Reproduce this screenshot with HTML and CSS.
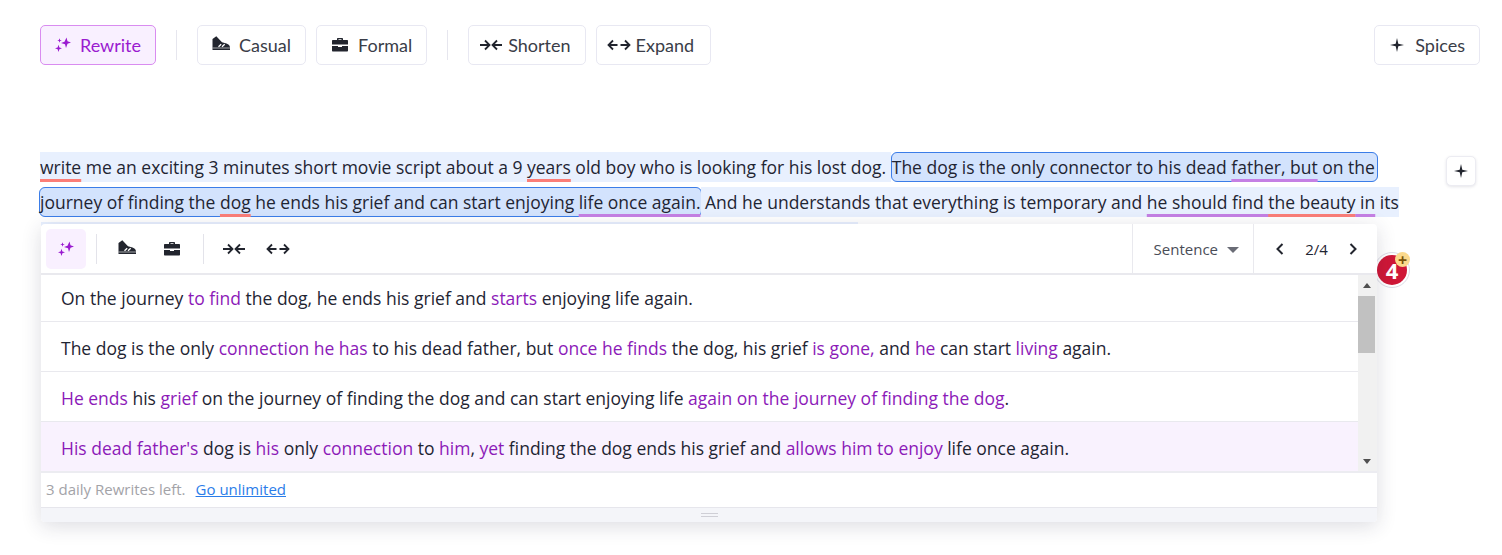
FILE: index.html
```html
<!DOCTYPE html>
<html lang="en">
<head>
  <meta charset="UTF-8">
  <title>Rewrite</title>
  <link rel="stylesheet" href="styles.css">
</head>
<body>
  <svg class="icon-defs" width="0" height="0">
    <defs>
      <symbol id="i-sparkle" viewBox="0 0 18 18">
        <path d="M12.500 1.500l1 3.700 3.500 1.300-3.500 1.300-1.500 4.200-1-3.700L7 7l3.500-1.300z"/>
        <path d="M5.500 2.200l.6 1.700 1.700.6-1.700.6-.6 1.700-.6-1.700-1.700-.6 1.700-.6z"/>
        <path d="M4.500 8.800l.9 2.600 2.600.9-2.600.9-.9 2.900-.9-2.900-2.600-.9 2.600-.9z"/>
      </symbol>
      <symbol id="i-shoe" viewBox="0 1 18 18">
        <path d="M.5 4L4.300 1.300 10 7.200l4.500 1.300c2.100.7 3.500 2 3.500 4V15H.5z"/>
        <path d="M6.500 11.800l2.700-2.600M10 11.800l2.700-2.600" fill="none" stroke="#fff" stroke-width="1.300"/>
        <path d="M.5 13h17.500" fill="none" stroke="#fff" stroke-width=".6"/>
      </symbol>
      <symbol id="i-case" viewBox="0 0 18 18">
        <path d="M6 4V2.800C6 2.200 6.500 2 7 2h4c.5 0 1 .2 1 .8V4h4c.6 0 1 .4 1 1v3.500H1V5c0-.6.4-1 1-1zm1.500 0h3V3.300h-3z" fill-rule="evenodd"/>
        <path d="M1 10h6v1h4v-1h6v4.500c0 .6-.4 1-1 1H2c-.6 0-1-.4-1-1z"/>
      </symbol>
      <symbol id="i-shorten" viewBox="0 0 24 14">
        <path d="M1 7h9M6 2.500L10.500 7 6 11.500M23 7h-9M18 2.500L13.500 7l4.500 4.500" fill="none" stroke="currentColor" stroke-width="1.800"/>
      </symbol>
      <symbol id="i-expand" viewBox="0 0 24 14">
        <path d="M1.500 7h9M6 2.500L1.500 7 6 11.500M13.500 7h9M18 2.500L22.500 7 18 11.500" fill="none" stroke="currentColor" stroke-width="1.800"/>
      </symbol>
      <symbol id="i-star" viewBox="0 0 16 16">
        <path d="M8 1l1.300 5.700L15 8l-5.700 1.300L8 15 6.700 9.300 1 8l5.700-1.300z"/>
      </symbol>
    </defs>
  </svg>

  <div class="toolbar">
    <button class="btn btn-active"><svg class="ic"><use href="#i-sparkle"/></svg>Rewrite</button>
    <span class="sep"></span>
    <button class="btn"><svg class="ic"><use href="#i-shoe"/></svg>Casual</button>
    <button class="btn"><svg class="ic"><use href="#i-case"/></svg>Formal</button>
    <span class="sep"></span>
    <button class="btn btn-tight"><svg class="ic-wide"><use href="#i-shorten"/></svg>Shorten</button>
    <button class="btn btn-tight btn-expand"><svg class="ic-wide"><use href="#i-expand"/></svg>Expand</button>
    <button class="btn btn-spices"><svg class="ic-star"><use href="#i-star"/></svg>Spices</button>
  </div>

  <div class="editor-row">
    <div class="editor">
      <p class="text"><span class="hl"><span class="ul-red">write</span> me an exciting 3 minutes short movie script about a 9 <span class="ul-red">years</span> old boy who is looking for his lost dog. </span><span class="sentence sentence-a">The dog is the only connector to his dead <span class="ul-purple">father, but</span> on the</span><br><span class="sentence sentence-b">journey of finding the <span class="ul-red">dog</span> he ends his grief and can start enjoying <span class="ul-purple">life once again.</span></span><span class="hl"> And he understands that everything is temporary and <span class="ul-purple">he should find <span class="ul-red">the beauty</span> in</span> its</span></p>

      <div class="peek"></div>
      <div class="badge">4<span class="badge-plus">+</span></div>

      <div class="popover">
        <div class="pop-bar">
          <span class="tool tool-on"><svg class="ic"><use href="#i-sparkle"/></svg></span>
          <span class="pop-sep"></span>
          <span class="tool tool-a"><svg class="ic"><use href="#i-shoe"/></svg></span>
          <span class="tool tool-b"><svg class="ic"><use href="#i-case"/></svg></span>
          <span class="pop-sep pop-sep2"></span>
          <span class="tool tool-c"><svg class="ic-wide"><use href="#i-shorten"/></svg></span>
          <span class="tool tool-d"><svg class="ic-wide"><use href="#i-expand"/></svg></span>
          <div class="pop-select">Sentence<span class="caret"></span></div>
          <div class="pop-pager">
            <svg class="chev" viewBox="0 0 10 14"><path d="M7.500 2L2.500 7l5 5"/></svg>
            <span>2/4</span>
            <svg class="chev" viewBox="0 0 10 14"><path d="M2.500 2l5 5-5 5"/></svg>
          </div>
        </div>

        <div class="pop-list">
          <div class="rows">
            <div class="row">On the journey <em>to find</em> the dog, he ends his grief and <em>starts</em> enjoying life again.</div>
            <div class="row">The dog is the only <em>connection he has</em> to his dead father, but <em>once he finds</em> the dog, his grief <em>is gone,</em> and <em>he</em> can start <em>living</em> again.</div>
            <div class="row"><em>He ends</em> his <em>grief</em> on the journey of finding the dog and can start enjoying life <em>again on the journey of finding the dog</em>.</div>
            <div class="row row-on"><em>His dead father's</em> dog is <em>his</em> only <em>connection</em> to <em>him</em>, <em>yet</em> finding the dog ends his grief and <em>allows him to enjoy</em> life once again.</div>
          </div>
          <div class="scroll">
            <span class="arrow-up"></span>
            <span class="thumb"></span>
            <span class="arrow-down"></span>
          </div>
        </div>

        <div class="pop-foot">3 daily Rewrites left.<a href="#">Go unlimited</a></div>
        <div class="pop-handle"><span></span></div>
      </div>
    </div>

    <button class="add"><svg class="ic-star"><use href="#i-star"/></svg></button>
  </div>
</body>
</html>
```

FILE: styles.css
```css
* {
  box-sizing: border-box;
}

body {
  margin: 0;
  height: 555px;
  overflow: hidden;
  background: #fff;
  color: #1f2533;
  font-family: 'Open Sans', sans-serif;
}

.icon-defs {
  position: absolute;
}

.toolbar {
  display: flex;
  align-items: center;
  padding: 25px 22px 0 40px;
}

.btn {
  display: flex;
  align-items: center;
  height: 40px;
  padding: 0 14px;
  margin-right: 10px;
  gap: 9px;
  background: #fff;
  border: 1px solid #e8e8f2;
  border-radius: 5px;
  color: #3a3d48;
  font-family: 'Lato', sans-serif;
  font-size: 18px;
}

.btn svg {
  fill: #22252e;
  color: #22252e;
}

.btn-active {
  padding: 0 14px 0 13px;
  gap: 8px;
  color: #9a1bd0;
  background: #f9f0ff;
  border-color: #d98cf0;
}

.btn-active svg {
  fill: #9a1bd0;
}

.btn-tight {
  padding: 0 14px 0 10px;
  gap: 5px;
}

.btn-expand {
  padding-right: 16px;
}

.btn-spices {
  margin: 0 0 0 auto;
  padding: 0 14px;
  gap: 10px;
}

.ic {
  width: 18px;
  height: 18px;
  flex: none;
}

.ic-wide {
  width: 24px;
  height: 14px;
  flex: none;
}

.ic-star {
  width: 16px;
  height: 16px;
  flex: none;
  fill: #22252e;
}

.sep {
  width: 1px;
  height: 30px;
  background: #e6e6ee;
  margin: 0 20px 0 10px;
}

.editor-row {
  display: flex;
  align-items: flex-start;
  padding: 85px 26px 0 40px;
}

.editor {
  position: relative;
  width: 1380px;
}

.text {
  margin: 0;
  font-size: 17.5px;
  line-height: 35px;
  white-space: nowrap;
}

.hl {
  background: #e8f0fe;
  padding: 3px 0;
}

.sentence {
  background: #d3e3fd;
  border: 1px solid #3b7de8;
  border-radius: 6px;
  padding: 2px 0;
}

.sentence-a {
  padding-right: 2px;
}

.sentence-b {
  margin: 0 -1px 0 -1px;
}

.ul-red,
.ul-purple {
  text-decoration-line: underline;
  text-decoration-thickness: 3px;
  text-underline-offset: 5px;
  text-decoration-skip-ink: none;
}

.ul-red {
  text-decoration-color: #fb7e78;
}

.ul-purple {
  text-decoration-color: #c580e4;
}

.peek {
  position: absolute;
  left: 1px;
  top: 72px;
  width: 817px;
  height: 4px;
  background: #e8f0fe;
}

.popover {
  position: absolute;
  left: 1px;
  top: 74px;
  width: 1336px;
  height: 298px;
  display: flex;
  flex-direction: column;
  background: #fff;
  border-radius: 4px;
  box-shadow: 0 4px 20px rgba(40, 40, 70, 0.16);
}

.pop-bar {
  display: flex;
  align-items: center;
  height: 51px;
  flex: none;
  border-bottom: 2px solid #e9e9ee;
}

.tool {
  display: flex;
  align-items: center;
  justify-content: center;
  height: 40px;
  width: 24px;
}

.tool svg {
  fill: #22252e;
  color: #22252e;
}

.tool-on {
  width: 40px;
  margin-left: 5px;
  background: #f9f0ff;
  border-radius: 5px;
}

.tool-on svg {
  fill: #9a1bd0;
}

.pop-sep {
  width: 1px;
  height: 30px;
  background: #e3e3ea;
  margin: 0 18px 0 10px;
}

.tool-b {
  margin-left: 21px;
}

.pop-sep2 {
  margin: 0 18px 0 19px;
}

.tool-d {
  margin-left: 20px;
}

.pop-select {
  display: flex;
  align-items: center;
  align-self: stretch;
  margin-left: auto;
  padding: 0 14px 0 21px;
  gap: 9px;
  border-left: 1px solid #e9e9ee;
  font-size: 15px;
  color: #4a4d57;
}

.caret {
  width: 0;
  height: 0;
  border-left: 6px solid transparent;
  border-right: 6px solid transparent;
  border-top: 6px solid #6a6c76;
  margin-top: 2px;
}

.pop-pager {
  display: flex;
  align-items: center;
  justify-content: space-between;
  align-self: stretch;
  width: 124px;
  padding: 0 19px 0 21px;
  border-left: 1px solid #e9e9ee;
  font-size: 15px;
}

.chev {
  width: 10px;
  height: 14px;
  fill: none;
  stroke: #22252e;
  stroke-width: 2;
}

.pop-list {
  display: flex;
  height: 198px;
  flex: none;
  border-bottom: 2px solid #ececf1;
}

.rows {
  flex: 1;
}

.row {
  height: 50px;
  padding-left: 20px;
  border-bottom: 1px solid #e9e9ee;
  font-size: 17.5px;
  line-height: 53px;
  white-space: nowrap;
}

.row:first-child {
  height: 47px;
  line-height: 47px;
}

.row:last-child {
  height: 49px;
  border-bottom: 0;
}

.row em {
  font-style: normal;
  color: #8c1ab8;
}

.row-on {
  background: #f9f2fe;
}

.scroll {
  display: flex;
  flex-direction: column;
  align-items: center;
  width: 19px;
  padding: 8px 2px 7px 0;
  background: #f1f1f1;
}

.thumb {
  width: 17px;
  height: 57px;
  margin-top: 8px;
  background: #c1c1c1;
}

.arrow-up,
.arrow-down {
  width: 0;
  height: 0;
  border-left: 4.500px solid transparent;
  border-right: 4.500px solid transparent;
}

.arrow-up {
  border-bottom: 5px solid #505050;
}

.arrow-down {
  margin-top: auto;
  border-top: 5px solid #505050;
}

.pop-foot {
  display: flex;
  align-items: center;
  gap: 10px;
  height: 35px;
  flex: none;
  padding: 0 0 2px 5px;
  border-bottom: 1px solid #e6e6ec;
  font-size: 15px;
  color: #a3a3a8;
}

.pop-foot a {
  color: #2b7de9;
}

.pop-handle {
  display: flex;
  justify-content: center;
  align-items: center;
  flex: 1;
  background: #f4f5f9;
  border-radius: 0 0 4px 4px;
}

.pop-handle span {
  width: 17px;
  height: 4px;
  border-top: 1px solid #cfcfd6;
  border-bottom: 1px solid #cfcfd6;
}

.badge {
  position: absolute;
  left: 1334px;
  top: 102px;
  width: 36px;
  height: 36px;
  display: flex;
  align-items: center;
  justify-content: center;
  padding: 2px;
  background: #cf1737;
  background-clip: content-box;
  border: 1px solid #dcdce6;
  border-radius: 50%;
  color: #fff;
  font-weight: 700;
  font-size: 22px;
}

.badge-plus {
  position: absolute;
  left: 20px;
  top: -1px;
  width: 15px;
  height: 15px;
  display: flex;
  align-items: center;
  justify-content: center;
  background: #fbd98c;
  border-radius: 50%;
  color: #7a5208;
  font-size: 16px;
  line-height: 1;
}

.add {
  display: flex;
  align-items: center;
  justify-content: center;
  width: 30px;
  height: 30px;
  margin: 6px 0 0 auto;
  padding: 0;
  background: #fff;
  border: 1px solid #ececf2;
  border-radius: 5px;
  box-shadow: 0 1px 3px rgba(40, 40, 70, 0.12);
}
```
